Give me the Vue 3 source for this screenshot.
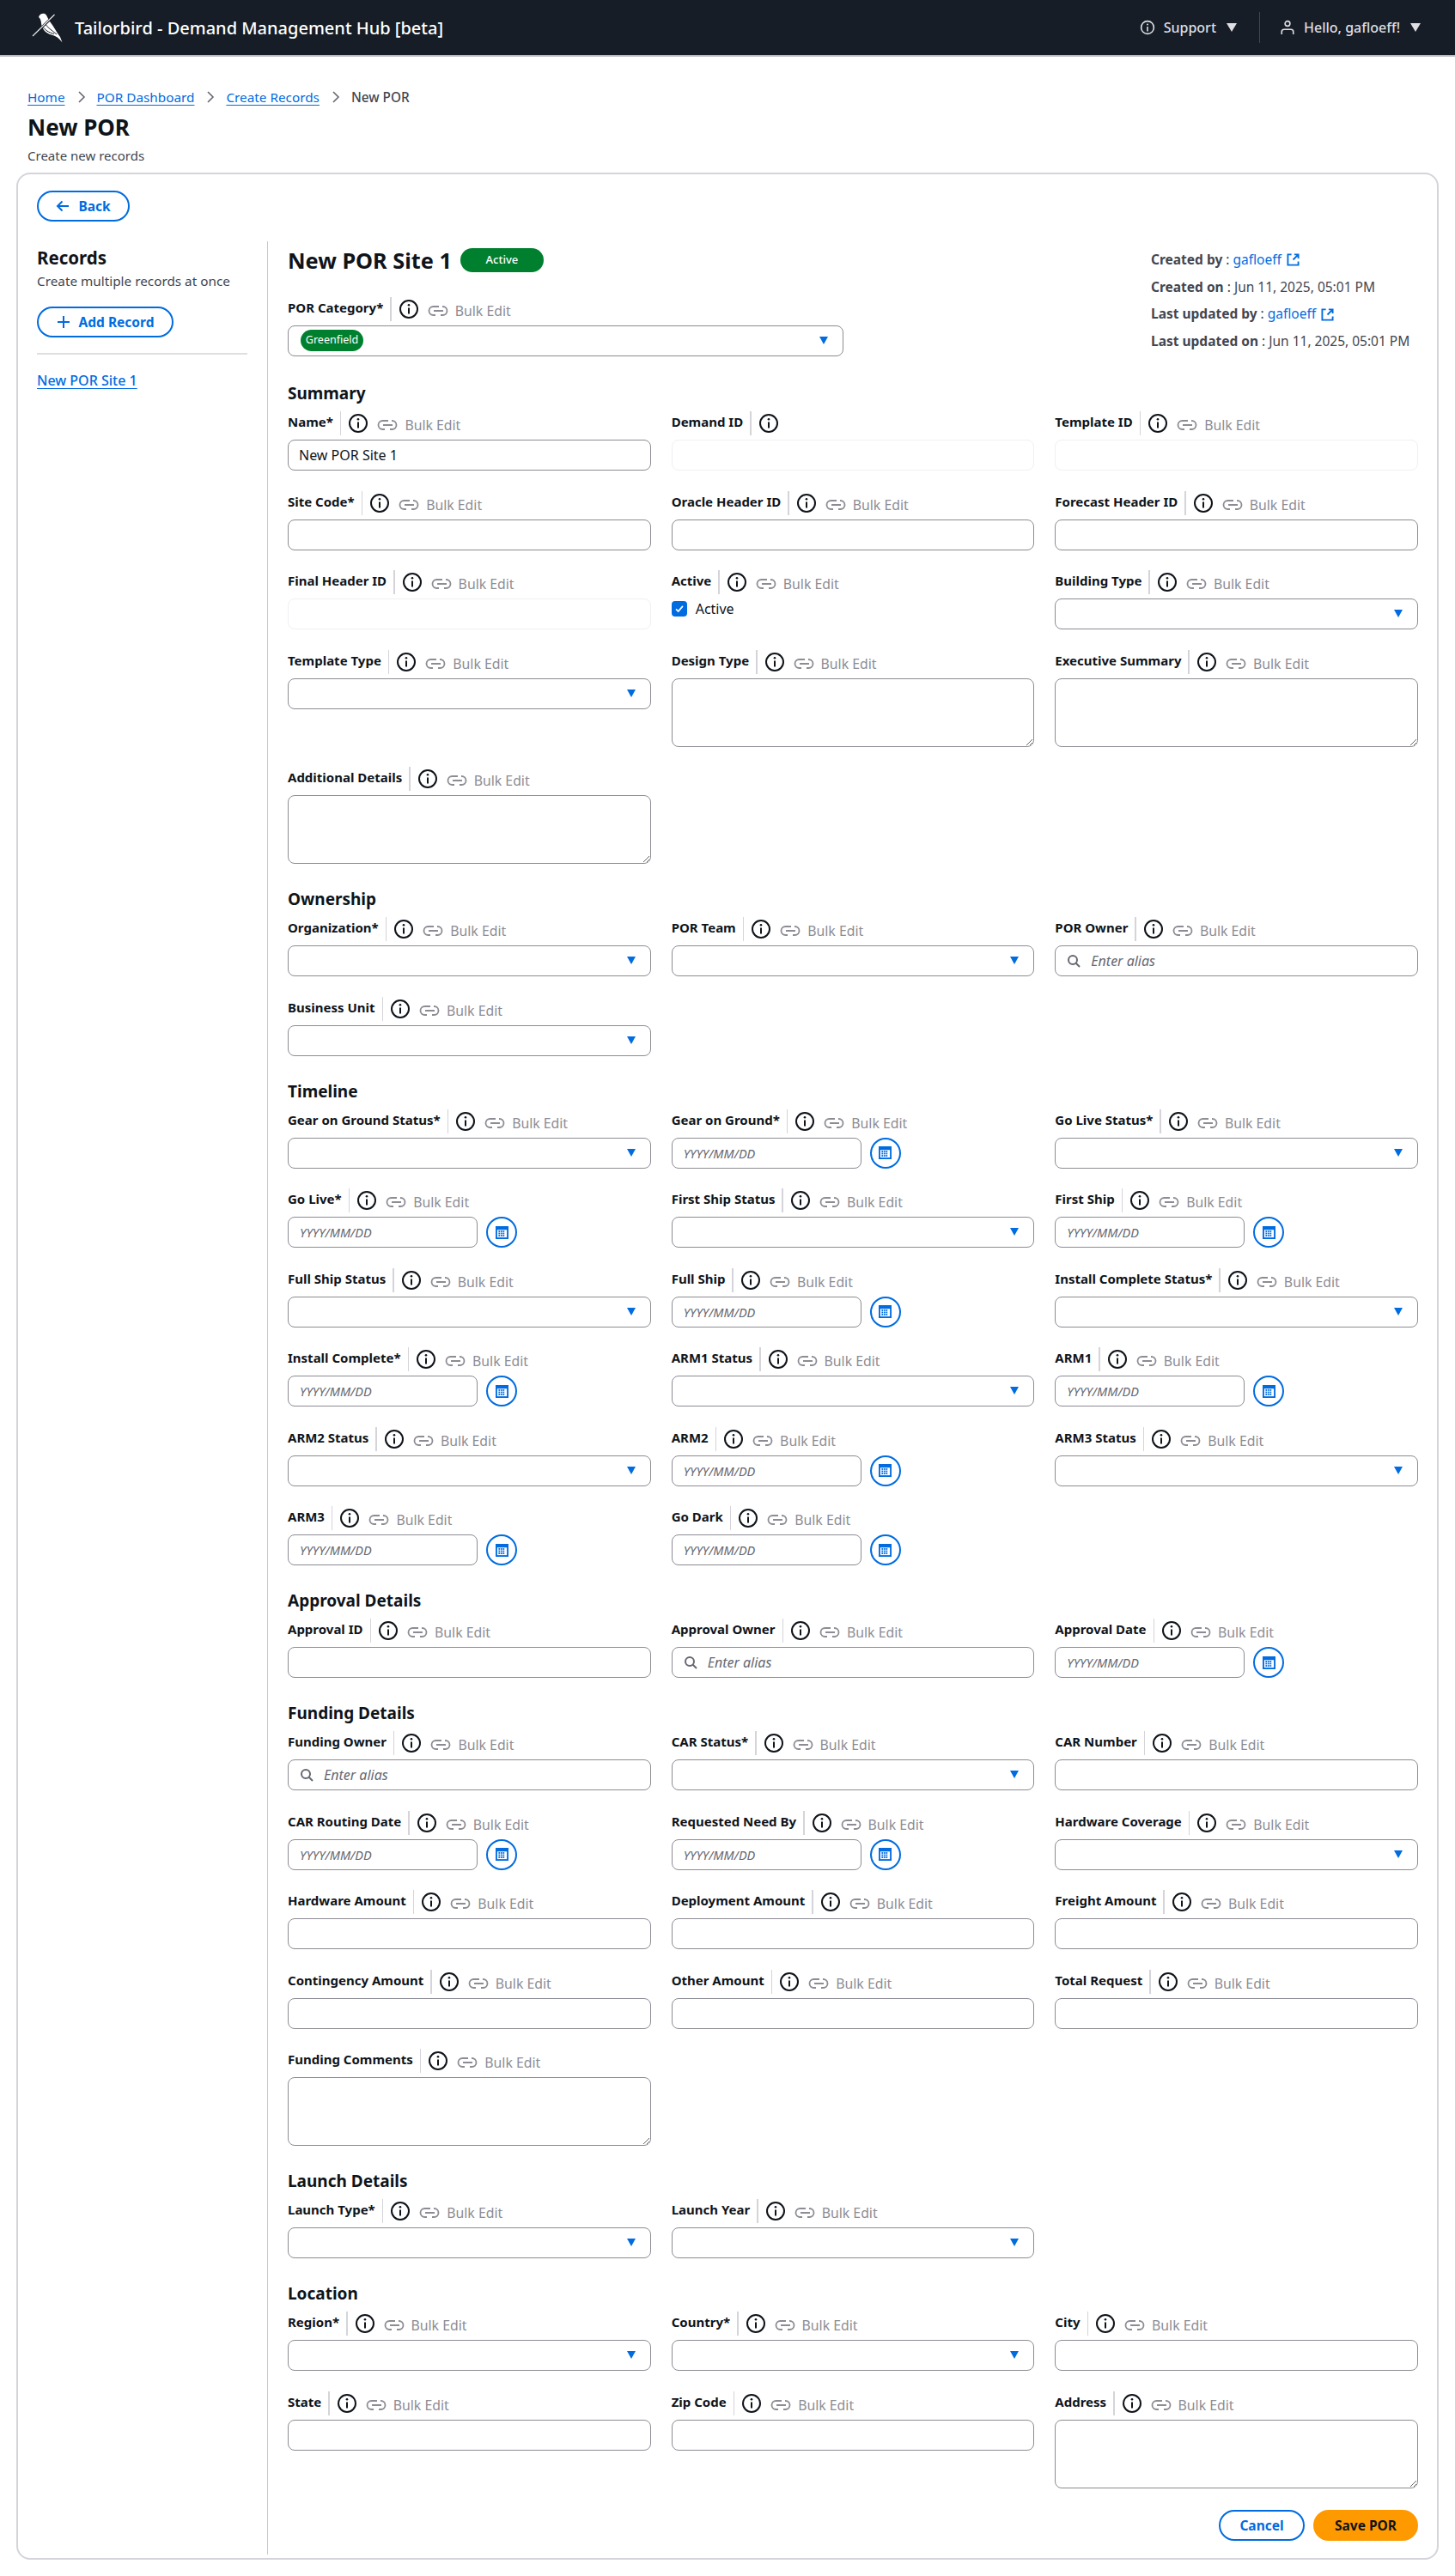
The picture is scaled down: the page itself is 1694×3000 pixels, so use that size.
<script setup>
const F = (label, type = 'text', extra = {}) => ({ label, type, bulk: true, ...extra })

const sections = [
  { title: 'Summary', fields: [
    F('Name*', 'text', { value: 'New POR Site 1' }), F('Demand ID', 'disabled', { bulk: false }), F('Template ID', 'disabled'),
    F('Site Code*'), F('Oracle Header ID'), F('Forecast Header ID'),
    F('Final Header ID', 'disabled'), F('Active', 'check'), F('Building Type', 'select'),
    F('Template Type', 'select'), F('Design Type', 'area'), F('Executive Summary', 'area'),
    F('Additional Details', 'area')
  ] },
  { title: 'Ownership', fields: [
    F('Organization*', 'select'), F('POR Team', 'select'), F('POR Owner', 'search'),
    F('Business Unit', 'select')
  ] },
  { title: 'Timeline', fields: [
    F('Gear on Ground Status*', 'select'), F('Gear on Ground*', 'date'), F('Go Live Status*', 'select'),
    F('Go Live*', 'date'), F('First Ship Status', 'select'), F('First Ship', 'date'),
    F('Full Ship Status', 'select'), F('Full Ship', 'date'), F('Install Complete Status*', 'select'),
    F('Install Complete*', 'date'), F('ARM1 Status', 'select'), F('ARM1', 'date'),
    F('ARM2 Status', 'select'), F('ARM2', 'date'), F('ARM3 Status', 'select'),
    F('ARM3', 'date'), F('Go Dark', 'date')
  ] },
  { title: 'Approval Details', fields: [
    F('Approval ID'), F('Approval Owner', 'search'), F('Approval Date', 'date')
  ] },
  { title: 'Funding Details', fields: [
    F('Funding Owner', 'search'), F('CAR Status*', 'select'), F('CAR Number'),
    F('CAR Routing Date', 'date'), F('Requested Need By', 'date'), F('Hardware Coverage', 'select'),
    F('Hardware Amount'), F('Deployment Amount'), F('Freight Amount'),
    F('Contingency Amount'), F('Other Amount'), F('Total Request'),
    F('Funding Comments', 'area')
  ] },
  { title: 'Launch Details', fields: [
    F('Launch Type*', 'select'), F('Launch Year', 'select')
  ] },
  { title: 'Location', fields: [
    F('Region*', 'select'), F('Country*', 'select'), F('City'),
    F('State'), F('Zip Code'), F('Address', 'area')
  ] }
]

const meta = [
  { key: 'Created by', link: 'gafloeff' },
  { key: 'Created on', text: 'Jun 11, 2025, 05:01 PM' },
  { key: 'Last updated by', link: 'gafloeff' },
  { key: 'Last updated on', text: 'Jun 11, 2025, 05:01 PM' }
]

const calCells = []
for (let r = 0; r < 3; r++) for (let c = 0; c < 3; c++) calCells.push({ x: 3.6 + c * 2.7, y: 5.4 + r * 2.7 })
</script>

<template>
  <div class="page">
    <header class="topbar">
      <div class="brand">
        <svg class="logo" viewBox="0 0 36 36" aria-hidden="true">
          <path d="M8 6C9 2 14 0.500 16.500 3C18 5 19 8 21 11C26 17 29 24 33 29L35.500 35.500C32 30.500 28 27.500 23 26.500C16 25 11.500 19 11 13C10.800 10 10 7.500 8 6Z" fill="#fff" />
          <path d="M15 13C18 18 23 21 29 26M13.500 18C17 22.500 22 24.500 26 25.500" stroke="#161d26" stroke-width="1" fill="none" />
          <path d="M26 4L1 28" stroke="#161d26" stroke-width="3" />
          <path d="M26.500 3L1 28" stroke="#e8e8e8" stroke-width="1.200" />
        </svg>
        <span class="brand-name">Tailorbird - Demand Management Hub [beta]</span>
      </div>
      <nav class="util">
        <div class="util-item">
          <svg class="util-icon" viewBox="0 0 20 20" aria-hidden="true"><circle cx="10" cy="10" r="8.200" fill="none" stroke="#dedee3" stroke-width="1.800" /><path d="M10 9v6" stroke="#dedee3" stroke-width="1.800" /><circle cx="10" cy="6" r="1.100" fill="#dedee3" /></svg>
          <span>Support</span>
          <i class="util-caret"></i>
        </div>
        <span class="util-sep"></span>
        <div class="util-item user">
          <svg class="util-icon" viewBox="0 0 20 20" aria-hidden="true"><circle cx="10" cy="5" r="3.200" fill="none" stroke="#dedee3" stroke-width="1.800" /><path d="M2.500 19v-3.500c0-2 1-3 3-3h9c2 0 3 1 3 3V19" fill="none" stroke="#dedee3" stroke-width="1.800" /></svg>
          <span>Hello, gafloeff!</span>
          <i class="util-caret"></i>
        </div>
      </nav>
    </header>

    <section class="page-head">
      <div class="crumbs">
        <a>Home</a>
        <svg class="chev" viewBox="0 0 10 16" aria-hidden="true"><path d="M2 2l6 6-6 6" fill="none" stroke="#656871" stroke-width="1.600" /></svg>
        <a>POR Dashboard</a>
        <svg class="chev" viewBox="0 0 10 16" aria-hidden="true"><path d="M2 2l6 6-6 6" fill="none" stroke="#656871" stroke-width="1.600" /></svg>
        <a>Create Records</a>
        <svg class="chev" viewBox="0 0 10 16" aria-hidden="true"><path d="M2 2l6 6-6 6" fill="none" stroke="#656871" stroke-width="1.600" /></svg>
        <span>New POR</span>
      </div>
      <h1>New POR</h1>
      <p>Create new records</p>
    </section>

    <main class="card">
      <button class="btn back">
        <svg viewBox="0 0 16 16" aria-hidden="true"><path d="M15 8H2M7.500 2.500L2 8l5.500 5.500" fill="none" stroke="#006ce0" stroke-width="2" /></svg>
        Back
      </button>

      <div class="columns">
        <aside class="side">
          <h2>Records</h2>
          <p>Create multiple records at once</p>
          <button class="btn add">
            <svg viewBox="0 0 16 16" aria-hidden="true"><path d="M8 1v14M1 8h14" fill="none" stroke="#006ce0" stroke-width="2" /></svg>
            Add Record
          </button>
          <div class="side-rule"></div>
          <a class="side-link">New POR Site 1</a>
        </aside>

        <div class="main">
          <div class="title-row">
            <div class="title-left">
              <div class="title-line">
                <h2>New POR Site 1</h2>
                <span class="badge">Active</span>
              </div>
              <div class="field category">
                <div class="label-row">
                  <label>POR Category*</label>
                  <span class="label-sep"></span>
                  <svg class="info" viewBox="0 0 22 22" aria-hidden="true"><circle cx="11" cy="11" r="10" fill="none" stroke="#0f141a" stroke-width="2" /><path d="M11 9.500V16.500" stroke="#0f141a" stroke-width="2" /><circle cx="11" cy="6.300" r="1.300" fill="#0f141a" /></svg>
                  <svg class="link-ic" viewBox="0 0 24 14" aria-hidden="true"><path d="M13 2H6.500a5 5 0 0 0 0 10H9M15 12h2.500a5 5 0 0 0 0-10H17M7 7h11" fill="none" stroke="#8c8c94" stroke-width="1.800" /></svg>
                  <span class="bulk">Bulk Edit</span>
                </div>
                <div class="box select-box">
                  <span class="pill">Greenfield</span>
                  <i class="caret"></i>
                </div>
              </div>
            </div>
            <dl class="meta">
              <div v-for="m in meta" :key="m.key" class="meta-row">
                <dt>{{ m.key }}</dt><span class="colon">&nbsp;:&nbsp;</span>
                <dd v-if="m.text">{{ m.text }}</dd>
                <dd v-else class="meta-link">
                  {{ m.link }}
                  <svg viewBox="0 0 16 16" aria-hidden="true"><path d="M6 1.500H1.500v13h13V10M9.500 1.500h5v5M14 2L8 8" fill="none" stroke="#006ce0" stroke-width="2" /></svg>
                </dd>
              </div>
            </dl>
          </div>

          <section v-for="s in sections" :key="s.title" class="form-section">
            <h3>{{ s.title }}</h3>
            <div class="grid">
              <div v-for="f in s.fields" :key="f.label" class="field">
                <div class="label-row">
                  <label>{{ f.label }}</label>
                  <span class="label-sep"></span>
                  <svg class="info" viewBox="0 0 22 22" aria-hidden="true"><circle cx="11" cy="11" r="10" fill="none" stroke="#0f141a" stroke-width="2" /><path d="M11 9.500V16.500" stroke="#0f141a" stroke-width="2" /><circle cx="11" cy="6.300" r="1.300" fill="#0f141a" /></svg>
                  <template v-if="f.bulk">
                    <svg class="link-ic" viewBox="0 0 24 14" aria-hidden="true"><path d="M13 2H6.500a5 5 0 0 0 0 10H9M15 12h2.500a5 5 0 0 0 0-10H17M7 7h11" fill="none" stroke="#8c8c94" stroke-width="1.800" /></svg>
                    <span class="bulk">Bulk Edit</span>
                  </template>
                </div>

                <input v-if="f.type === 'text'" class="box input" type="text" :value="f.value || ''" readonly />
                <input v-else-if="f.type === 'disabled'" class="box input off" type="text" disabled />
                <textarea v-else-if="f.type === 'area'" class="box area" readonly></textarea>
                <div v-else-if="f.type === 'select'" class="box select-box"><i class="caret"></i></div>
                <div v-else-if="f.type === 'check'" class="check-row">
                  <span class="check"><svg viewBox="0 0 16 16" aria-hidden="true"><path d="M3.500 8.500l3 3 6-7" fill="none" stroke="#fff" stroke-width="2" /></svg></span>
                  <span>Active</span>
                </div>
                <div v-else-if="f.type === 'search'" class="box search-box">
                  <svg viewBox="0 0 16 16" aria-hidden="true"><circle cx="7" cy="7" r="5" fill="none" stroke="#656871" stroke-width="2" /><path d="M10.500 10.500L15 15" stroke="#656871" stroke-width="2" /></svg>
                  <span class="ph">Enter alias</span>
                </div>
                <div v-else-if="f.type === 'date'" class="date-row">
                  <div class="box date-box"><span class="ph">YYYY/MM/DD</span></div>
                  <span class="cal">
                    <svg viewBox="0 0 16 16" aria-hidden="true">
                      <rect x="1" y="1" width="14" height="14" fill="none" stroke="#006ce0" stroke-width="2" />
                      <rect x="1" y="1" width="14" height="3.500" fill="#006ce0" />
                      <rect v-for="(c, i) in calCells" :key="i" :x="c.x" :y="c.y" width="1.900" height="1.900" fill="#006ce0" />
                    </svg>
                  </span>
                </div>
              </div>
            </div>
          </section>

          <div class="actions">
            <button class="btn cancel">Cancel</button>
            <button class="btn save">Save POR</button>
          </div>
        </div>
      </div>
    </main>
  </div>
</template>

<style>
html, body { margin: 0; background: #fff; }
</style>

<style scoped>
.page {
  font-family: "Noto Sans", "Open Sans", Arial, sans-serif;
  font-size: 15px;
  color: #0f141a;
  height: 3000px;
  overflow: hidden;
  background: #fff;
}
.topbar {
  height: 64px;
  box-sizing: content-box;
  background: #161d26;
  border-bottom: 2px solid #b8b8c0;
  display: flex;
  align-items: center;
  justify-content: space-between;
  padding: 0 40px 0 37px;
}
.brand { display: flex; align-items: center; gap: 14px; }
.logo { width: 36px; height: 36px; display: block; }
.brand-name { color: #fff; font-size: 20px; font-weight: 500; }
.util { display: flex; align-items: center; color: #dedee3; font-weight: 500; font-size: 16px; }
.util-item { display: flex; align-items: center; }
.util-icon { width: 18px; height: 18px; margin-right: 10px; }
.util-caret { width: 0; height: 0; border-left: 6px solid transparent; border-right: 6px solid transparent; border-top: 10px solid #dedee3; margin-left: 12px; }
.util-sep { width: 1px; height: 36px; background: #424650; margin: 0 23px 0 26px; }

.page-head { padding: 37px 32px 0; height: 98px; }
.crumbs { display: flex; align-items: center; height: 20px; line-height: 20px; color: #424650; font-weight: 500; font-size: 15.300px; }
.crumbs a { color: #006ce0; font-weight: 400; text-decoration: underline; text-underline-offset: 3px; }
.chev { width: 10px; height: 16px; margin: 0 13px 0 14px; }
h1 { margin: 7px 0 0; font-size: 26px; line-height: 36px; font-weight: 700; }
.page-head p { margin: 5px 0 0; line-height: 20px; color: #424650; font-size: 15px; }

.card {
  box-sizing: border-box;
  width: 1656px;
  height: 2780px;
  margin-left: 19px;
  border: 2px solid #d4d4da;
  border-radius: 16px;
  padding: 19px 22px 0;
}
.btn {
  font-family: inherit;
  font-size: 15.500px;
  font-weight: 700;
  height: 36px;
  border-radius: 18px;
  box-sizing: border-box;
  border: 2px solid #006ce0;
  background: #fff;
  color: #006ce0;
  display: inline-flex;
  align-items: center;
  justify-content: center;
  padding: 0;
}
.btn svg { width: 16px; height: 16px; margin-right: 10px; }
.back { width: 108px; }
.add { width: 159px; }
.cancel { width: 100px; }
.save { width: 122px; background: #ff9900; border-color: #ff9900; color: #0f141a; }

.columns { display: flex; margin-top: 23px; height: 2694px; }
.side { width: 245px; margin-right: 23px; flex: none; }
.side h2 { margin: 6px 0 0; font-size: 20.500px; line-height: 26px; font-weight: 700; }
.side p { margin: 4px 0 0; font-size: 15.300px; line-height: 20px; color: #424650; }
.side .add { margin-top: 20px; }
.side-rule { height: 2px; background: #dedee3; margin-top: 18px; }
.side-link { display: inline-block; margin-top: 20px; color: #006ce0; font-weight: 500; font-size: 16px; text-decoration: underline; text-underline-offset: 3px; line-height: 20px; }

.main { flex: 1; border-left: 1px solid #c6c6cd; padding-left: 23px; min-width: 0; }
.title-row { display: flex; justify-content: space-between; height: 136px; }
.title-left { width: 647px; }
.title-line { display: flex; align-items: center; margin-top: 8px; height: 28px; gap: 10px; }
.title-line h2 { margin: 0; font-size: 25.300px; line-height: 28px; font-weight: 700; }
.badge { width: 97px; height: 28px; line-height: 27px; border-radius: 14px; background: #00802f; color: #fff; font-size: 13px; text-align: center; font-weight: 500; }
.category { margin-top: 29px; }
.pill { position: absolute; left: 14px; top: 4px; width: 73px; height: 25px; line-height: 24px; text-align: center; border-radius: 13px; background: #00802f; color: #fff; font-size: 12.500px; }

.meta { margin: 6px 0 0; width: 311px; flex: none; }
.meta-row { display: flex; height: 31.700px; line-height: 31.700px; color: #424650; font-size: 15.500px; white-space: nowrap; }
dt { font-weight: 700; }
dd { margin: 0; }
.meta-link { color: #006ce0; display: flex; align-items: center; }
.meta-link svg { width: 15px; height: 15px; margin-left: 6px; }

.form-section h3 { margin: 27px 0 0; font-size: 19px; line-height: 28px; font-weight: 700; height: 28px; }
.grid { display: grid; grid-template-columns: repeat(3, minmax(0, 1fr)); column-gap: 24px; row-gap: 23.500px; align-items: start; margin-top: 7px; }
.label-row { display: flex; align-items: flex-start; height: 33px; }
.label-row label { font-weight: 700; font-size: 15px; line-height: 24px; white-space: nowrap; }
.label-sep { width: 1.500px; height: 28px; background: #d4d4da; margin: 0 9px 0 8px; flex: none; }
.info { width: 22px; height: 22px; margin-top: 3px; flex: none; }
.link-ic { width: 24px; height: 14px; margin: 9px 8px 0 11px; flex: none; }
.bulk { color: #8c8c94; font-size: 15.800px; line-height: 20px; margin-top: 6px; white-space: nowrap; }

.box { box-sizing: border-box; display: block; width: 100%; height: 36px; border: 1.500px solid #8c8c94; border-radius: 8px; background: #fff; font-family: inherit; font-size: 16px; color: #0f141a; position: relative; margin: 0; }
.input { padding: 0 12px; outline: none; }
.off { border-color: #f0f0f3; background: #fff; }
.area { height: 80px; resize: vertical; outline: none; padding: 4px 12px; vertical-align: top; }
.select-box { cursor: default; }
.caret { position: absolute; right: 17px; top: 12px; width: 0; height: 0; border-left: 5.500px solid transparent; border-right: 5.500px solid transparent; border-top: 9px solid #006ce0; }
.search-box { display: flex; align-items: center; padding-left: 13px; }
.search-box svg { width: 16px; height: 16px; margin-right: 12px; flex: none; }
.ph { font-style: italic; color: #656871; font-size: 16px; }
.date-row { display: flex; align-items: center; gap: 10px; }
.date-box { width: 221px; display: flex; align-items: center; padding-left: 13px; }
.date-box .ph { font-size: 14.500px; }
.cal { width: 36px; height: 36px; box-sizing: border-box; border: 2px solid #006ce0; border-radius: 50%; display: flex; align-items: center; justify-content: center; flex: none; }
.cal svg { width: 15px; height: 15px; }
.check-row { display: flex; align-items: center; gap: 10px; height: 20px; margin-top: 2px; font-size: 16px; }
.check { width: 18px; height: 18px; border-radius: 4px; background: #006ce0; display: flex; align-items: center; justify-content: center; }
.check svg { width: 14px; height: 14px; }

.actions { display: flex; justify-content: flex-end; gap: 10px; margin-top: 25.500px; }
</style>
